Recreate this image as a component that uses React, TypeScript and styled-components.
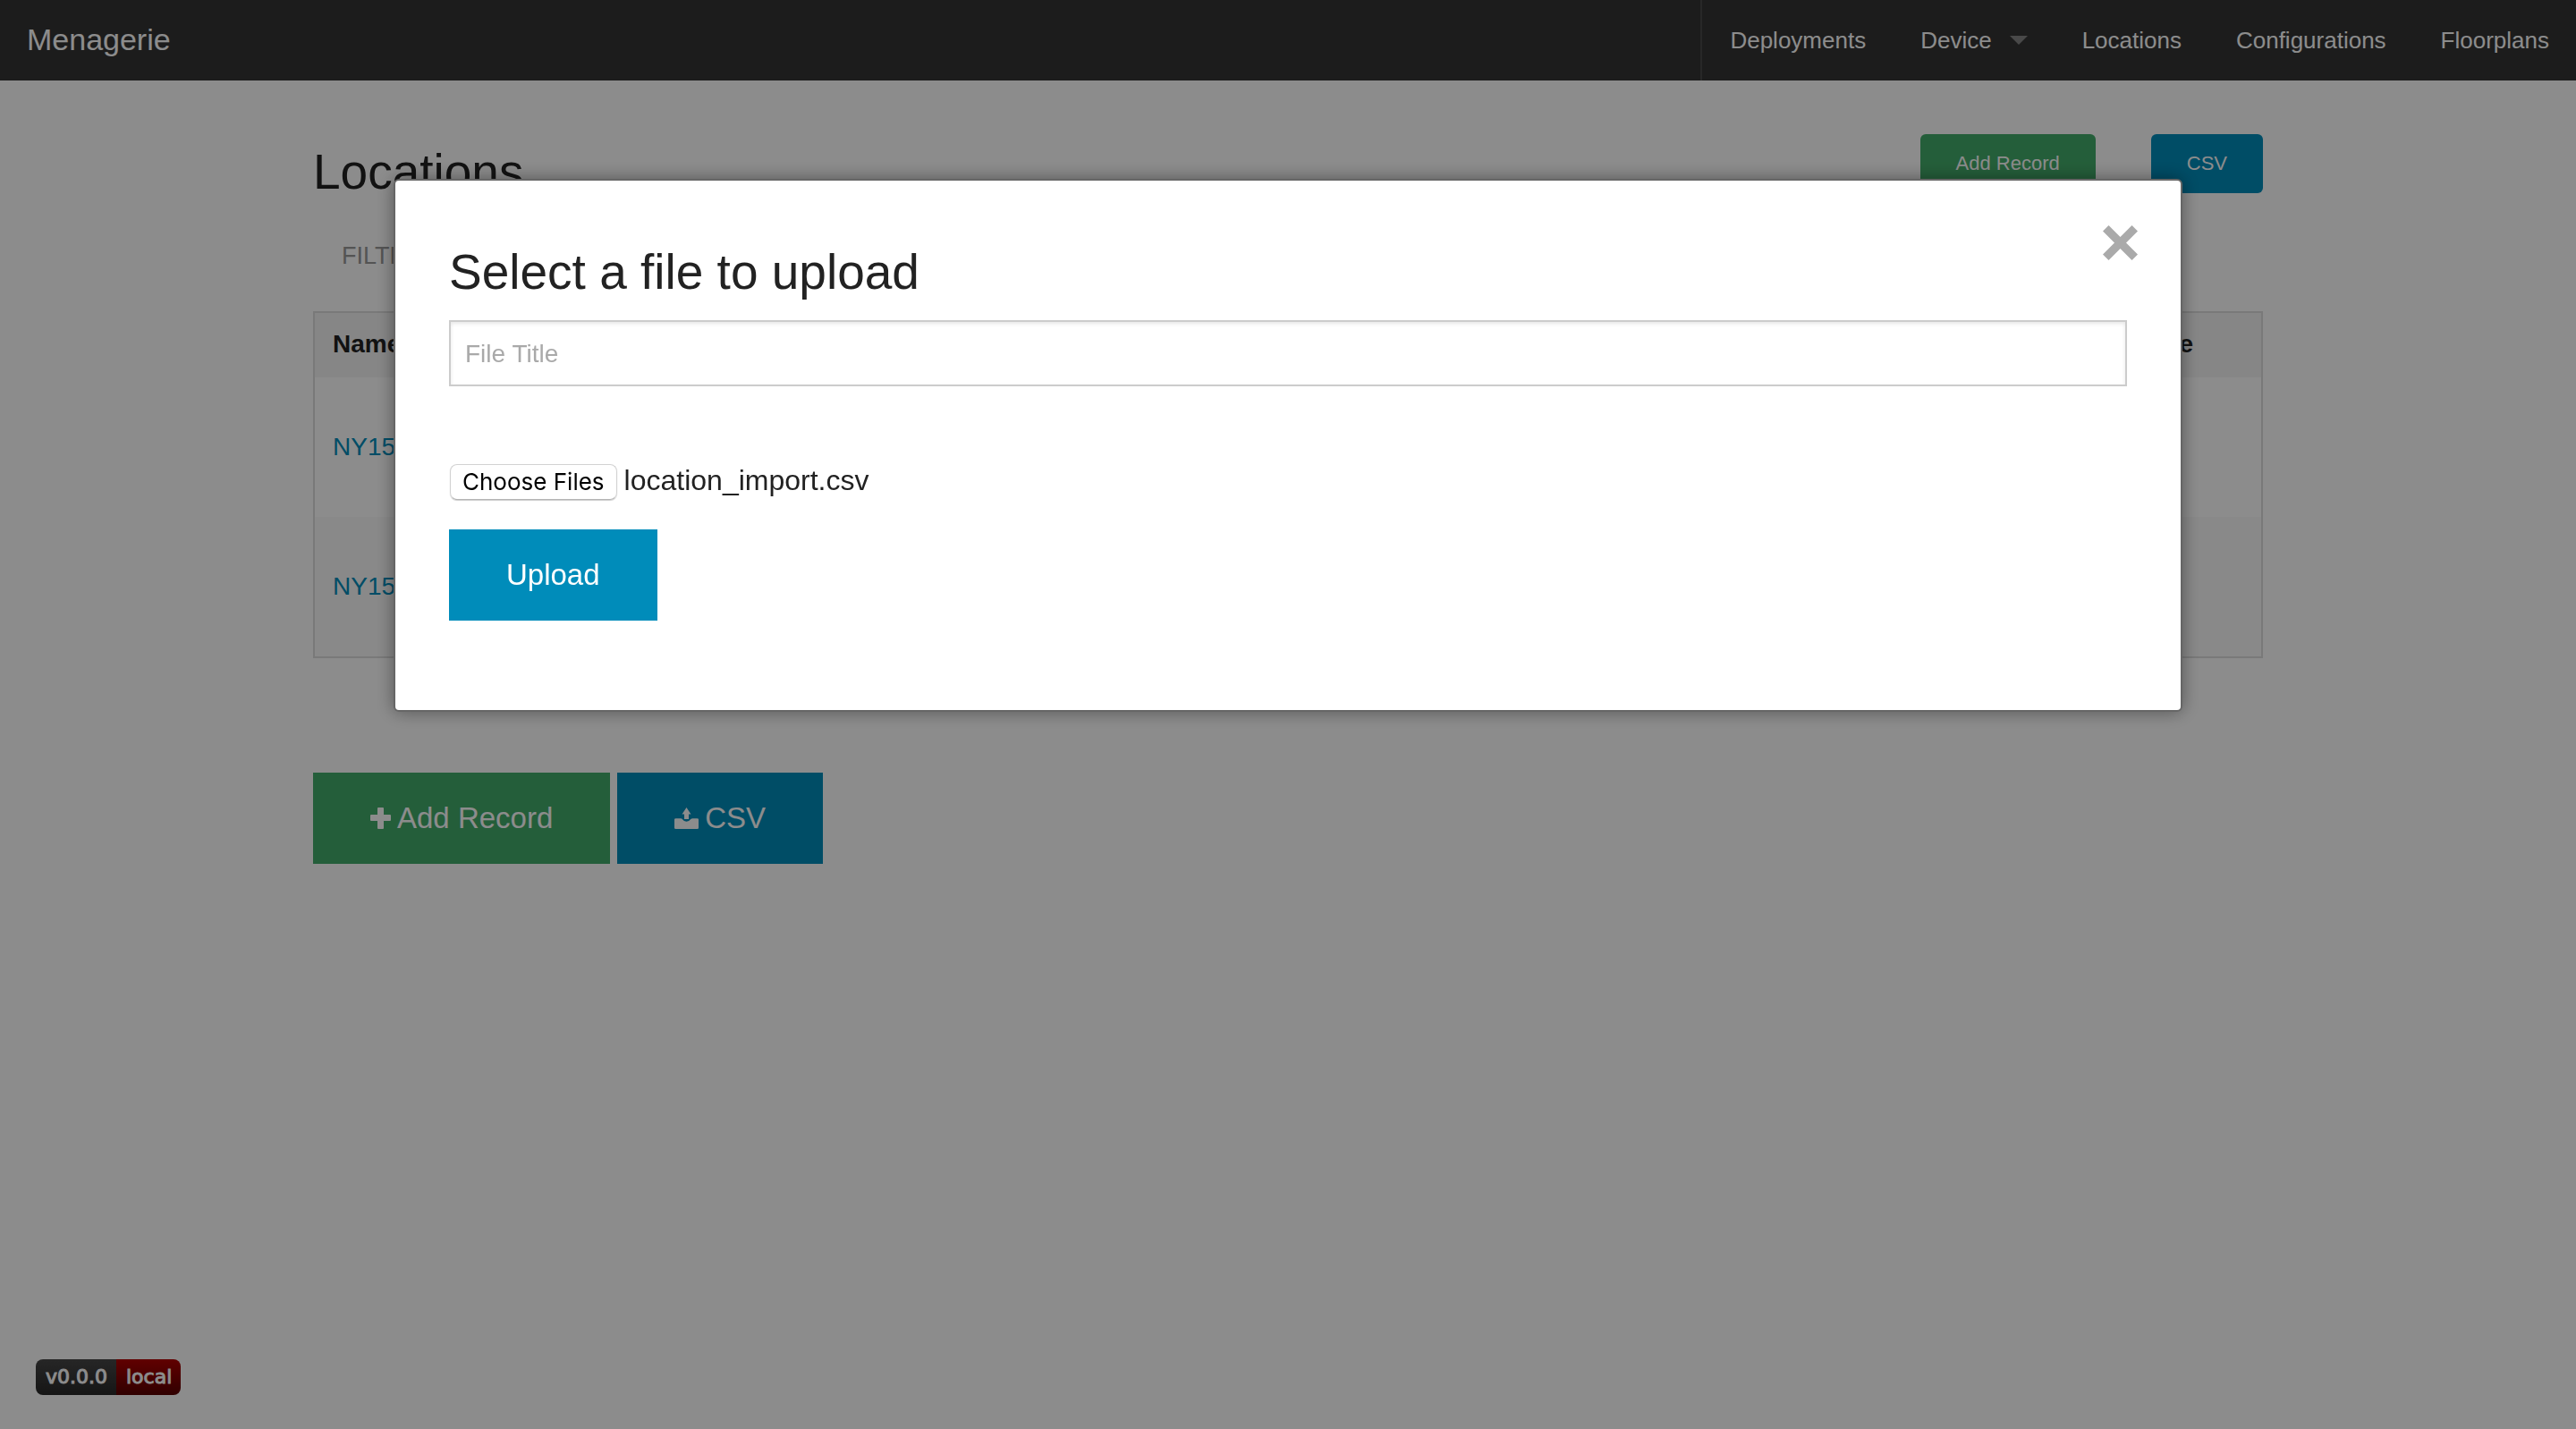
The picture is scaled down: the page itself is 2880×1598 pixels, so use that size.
import React from "react";
import styled, { createGlobalStyle } from "styled-components";

const GlobalStyle = createGlobalStyle`
  *, *::before, *::after { box-sizing: border-box; }
  body {
    margin: 0;
    background: #fff;
    color: #222;
    font-family: "Liberation Sans", Arial, Helvetica, sans-serif;
    font-size: 32px;
    -webkit-font-smoothing: antialiased;
  }
`;

const TopBar = styled.nav`
  display: flex;
  justify-content: space-between;
  height: 90px;
  background: #333;
  line-height: 88px;
`;

const Brand = styled.a`
  padding: 0 30px;
  color: #fff;
  font-size: 34px;
  text-decoration: none;
`;

const Menu = styled.ul`
  display: flex;
  margin: 0;
  padding: 0;
  list-style: none;
  border-left: 2px solid #484848;
`;

const MenuLink = styled.a`
  display: flex;
  align-items: center;
  gap: 20px;
  padding: 0 30px 0 31px;
  color: #fff;
  font-size: 26px;
  line-height: 90px;
  text-decoration: none;
`;

const Caret = styled.span`
  border: 10px solid transparent;
  border-top-color: #858585;
  border-bottom: 0;
`;

const Main = styled.main`
  max-width: 2180px;
  margin: 60px auto 0;
`;

const PageHeader = styled.header`
  display: flex;
  justify-content: space-between;
  align-items: flex-start;
`;

const Title = styled.h3`
  margin: 4px 0 16px;
  font-size: 55px;
  line-height: 76px;
  font-weight: 400;
`;

const Actions = styled.div<{ $gap: number }>`
  display: flex;
  gap: ${(p) => p.$gap}px;
`;

const Button = styled.button<{ $tone: "success" | "primary"; $small?: boolean }>`
  display: inline-flex;
  align-items: center;
  justify-content: center;
  gap: 7px;
  height: ${(p) => (p.$small ? 66 : 102)}px;
  padding: 0 ${(p) => (p.$small ? 40 : 64)}px;
  border: 0;
  border-radius: ${(p) => (p.$small ? 6 : 0)}px;
  background: ${(p) => (p.$tone === "success" ? "#43ac6a" : "#008cba")};
  color: #fff;
  font-family: inherit;
  font-size: ${(p) => (p.$small ? 22 : 33)}px;
  cursor: pointer;
`;

const Filters = styled.div`
  margin: 20px 0 42px;
  padding-left: 32px;
  color: #999;
  font-size: 27px;
  line-height: 40px;
  text-transform: uppercase;
`;

const Table = styled.table`
  width: 100%;
  margin-bottom: 128px;
  border: 2px solid #ddd;
  border-collapse: separate;
  border-spacing: 0;
  font-size: 28px;
  line-height: 36px;
  text-align: left;

  thead { background: #f5f5f5; }
  tbody tr:nth-child(even) { background: #f9f9f9; }
`;

const Th = styled.th<{ $narrow?: boolean }>`
  width: ${(p) => (p.$narrow ? "180px" : "auto")};
  padding: 17px 20px 19px;
  font-weight: 700;
`;

const Td = styled.td`
  padding: 60px 20px;

  a { color: #008cba; text-decoration: none; }
`;

const Badge = styled.div`
  position: fixed;
  left: 40px;
  bottom: 38px;
  display: flex;
  overflow: hidden;
  border-radius: 8px;
  color: #fff;
  font-family: "DejaVu Sans", Verdana, sans-serif;
  font-size: 22px;
  line-height: 40px;
  -webkit-text-stroke: 1px #fff;
`;

const BadgePart = styled.span<{ $from: string; $to: string }>`
  padding: 0 10px 0 11px;
  background: linear-gradient(${(p) => p.$from}, ${(p) => p.$to});
`;

const Overlay = styled.div`
  position: fixed;
  inset: 0;
  display: flex;
  justify-content: center;
  align-items: flex-start;
  padding: 200px 40px 0;
  background: rgba(0, 0, 0, 0.45);
`;

const Modal = styled.section`
  position: relative;
  width: 100%;
  max-width: 2000px;
  padding: 60px 60px 100px;
  border: 2px solid #666;
  border-radius: 6px;
  background: #fff;
  box-shadow: 0 0 20px rgba(0, 0, 0, 0.4);
`;

const CloseButton = styled.button`
  position: absolute;
  top: 50px;
  right: 48px;
  display: flex;
  padding: 0;
  border: 0;
  background: none;
  cursor: pointer;
`;

const TextInput = styled.input`
  display: block;
  width: 100%;
  height: 74px;
  margin-bottom: 84px;
  padding: 2px 16px 0;
  border: 2px solid #ccc;
  border-radius: 0;
  background: #fff;
  box-shadow: inset 0 2px 4px rgba(0, 0, 0, 0.1);
  color: #4d4d4d;
  font-family: inherit;
  font-size: 28px;

  &::placeholder { color: #a9a9a9; opacity: 1; }
`;

const FilePicker = styled.div`
  display: flex;
  align-items: center;
  gap: 8px;
  height: 42px;
  margin-bottom: 34px;
`;

const HiddenFile = styled.input`
  position: absolute;
  width: 1px;
  height: 1px;
  opacity: 0;
`;

const FileLabel = styled.label`
  height: 40px;
  margin: 4px 0 0 1px;
  padding: 0 13px;
  border: 1px solid #d2d2d2;
  border-bottom-color: #b4b4b4;
  border-radius: 8px;
  box-shadow: 0 1px 1px rgba(0, 0, 0, 0.2);
  color: #000;
  font-family: Inter, sans-serif;
  font-size: 26px;
  line-height: 38px;
  cursor: pointer;
`;

const PlusIcon = () => (
  <svg width="23" height="24" viewBox="0 0 23 24" fill="currentColor" aria-hidden="true">
    <path d="M9 0h5q1 0 1 1v7h7q1 0 1 1v5q0 1-1 1h-7v8q0 1-1 1H9q-1 0-1-1v-8H1q-1 0-1-1V9q0-1 1-1h7V1q0-1 1-1z" />
  </svg>
);

const UploadIcon = () => (
  <svg width="27" height="24" viewBox="0 0 27 27.500" preserveAspectRatio="none" fill="currentColor" aria-hidden="true">
    <path d="M13.500 0L18.500 8.500H16V15H11V8.500H8.500z" />
    <path d="M1.500 14H7q1.500 0 2 1.200 1.500 2.800 4.500 2.800t4.500-2.800Q19 14 20.500 14h5q1.500 0 1.500 1.500V26q0 1.500-1.500 1.500h-24Q0 27.500 0 26V15.500Q0 14 1.500 14z" />
  </svg>
);

const CloseIcon = () => (
  <svg width="39" height="39" viewBox="0 0 39 39" fill="#aaa" aria-hidden="true">
    <path d="M0 6.500L6.500 0l13 13 13-13L39 6.500l-13 13 13 13-6.500 6.500-13-13-13 13L0 32.500l13-13z" />
  </svg>
);

const links = ["Deployments", "Device", "Locations", "Configurations", "Floorplans"];
const locations = ["NY15-1", "NY15-2"];

export default function App() {
  return (
    <>
      <GlobalStyle />
      <TopBar>
        <Brand href="#">Menagerie</Brand>
        <Menu>
          {links.map((name) => (
            <li key={name}>
              <MenuLink href="#">
                {name}
                {name === "Device" && <Caret />}
              </MenuLink>
            </li>
          ))}
        </Menu>
      </TopBar>

      <Main>
        <PageHeader>
          <Title>Locations</Title>
          <Actions $gap={62}>
            <Button $tone="success" $small>Add Record</Button>
            <Button $tone="primary" $small>CSV</Button>
          </Actions>
        </PageHeader>
        <Filters>Filter:</Filters>
        <Table>
          <thead>
            <tr>
              <Th>Name</Th>
              <Th $narrow>Delete</Th>
            </tr>
          </thead>
          <tbody>
            {locations.map((name) => (
              <tr key={name}>
                <Td><a href="#">{name}</a></Td>
                <Td />
              </tr>
            ))}
          </tbody>
        </Table>
        <Actions $gap={8}>
          <Button $tone="success"><PlusIcon />Add Record</Button>
          <Button $tone="primary"><UploadIcon />CSV</Button>
        </Actions>
      </Main>

      <Badge>
        <BadgePart $from="#464646" $to="#282828">v0.0.0</BadgePart>
        <BadgePart $from="#b00000" $to="#580000">local</BadgePart>
      </Badge>

      <Overlay>
        <Modal role="dialog" aria-modal="true" aria-labelledby="upload-title">
          <CloseButton type="button" aria-label="Close"><CloseIcon /></CloseButton>
          <Title id="upload-title">Select a file to upload</Title>
          <TextInput type="text" placeholder="File Title" aria-label="File Title" />
          <FilePicker>
            <HiddenFile id="upload-files" type="file" multiple />
            <FileLabel htmlFor="upload-files">Choose Files</FileLabel>
            <span>location_import.csv</span>
          </FilePicker>
          <Button $tone="primary" type="submit">Upload</Button>
        </Modal>
      </Overlay>
    </>
  );
}
